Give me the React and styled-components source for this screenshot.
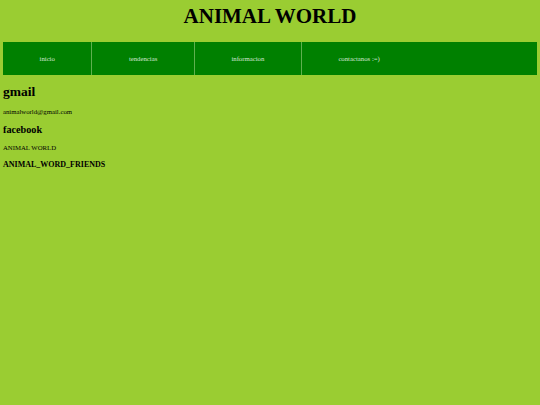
import React from "react";
import styled, { createGlobalStyle } from "styled-components";

const GlobalStyle = createGlobalStyle`
  html, body {
    margin: 0;
    padding: 0;
    background-color: #9acd32;
  }
  body {
    font-family: "Liberation Serif", "Times New Roman", serif;
    color: #000;
  }
`;

const Page = styled.div`
  padding: 0 3px;
  min-height: 405px;
  box-sizing: border-box;
`;

const Title = styled.h1`
  margin: 1px 0 14px;
  padding-top: 3px;
  font-size: 21px;
  line-height: 24px;
  font-weight: 700;
  text-align: center;
`;

const Nav = styled.ul`
  display: flex;
  margin: 0;
  padding: 0;
  list-style: none;
  height: 33px;
  background-color: #008000;
`;

const NavItem = styled.li`
  padding: 0 36.5px;
  line-height: 33px;
  font-size: 6.75px;
  color: #d6e6d6;
  border-right: ${(p) => (p.last ? "none" : "1px solid #5fb04f")};
`;

const Contact = styled.div`
  padding-top: 9px;
`;

const Heading = styled.h2`
  margin: 0 0 ${(p) => p.gap}px;
  font-size: ${(p) => p.size}px;
  line-height: ${(p) => p.lh}px;
  font-weight: 700;
`;

const Text = styled.p`
  margin: 0 0 ${(p) => p.gap}px;
  font-size: 6.75px;
  line-height: 8px;
`;

const links = ["inicio", "tendencias", "informacion", "contactanos :=)"];

export default function App() {
  return (
    <>
      <GlobalStyle />
      <Page>
        <Title>ANIMAL WORLD</Title>
        <Nav>
          {links.map((l, i) => (
            <NavItem key={l} last={i === links.length - 1}>
              {l}
            </NavItem>
          ))}
        </Nav>
        <Contact>
          <Heading size={13.5} lh={15} gap={8.7}>
            gmail
          </Heading>
          <Text gap={8}>animalworld@gmail.com</Text>
          <Heading as="h3" size={10.2} lh={12} gap={8.4}>
            facebook
          </Heading>
          <Text gap={8}>ANIMAL WORLD</Text>
          <Heading as="h4" size={8} lh={9} gap={0}>
            ANIMAL_WORD_FRIENDS
          </Heading>
        </Contact>
      </Page>
    </>
  );
}
